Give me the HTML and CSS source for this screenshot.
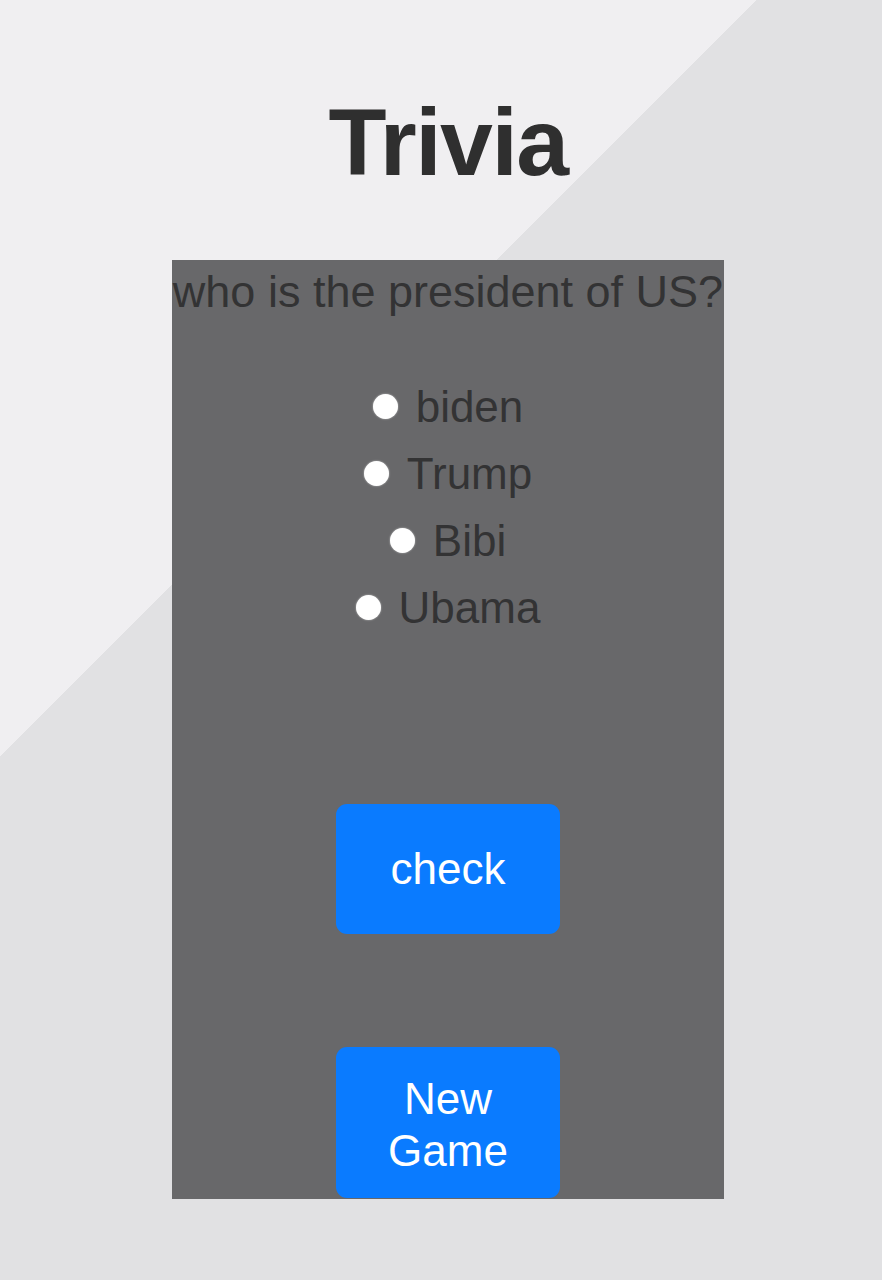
FILE: index.html
```html
<!DOCTYPE html>
<html lang="en">
<head>
<meta charset="utf-8">
<title>Trivia</title>
<link rel="stylesheet" href="styles.css">
</head>
<body>
<main class="page">
  <h1 class="title">Trivia</h1>
  <section class="card">
    <p class="question">who is the president of US?</p>
    <form class="options">
      <label class="option"><input type="radio" name="answer" class="radio"><span>biden</span></label>
      <label class="option"><input type="radio" name="answer" class="radio"><span>Trump</span></label>
      <label class="option"><input type="radio" name="answer" class="radio"><span>Bibi</span></label>
      <label class="option"><input type="radio" name="answer" class="radio"><span>Ubama</span></label>
    </form>
    <button class="btn btn-check" type="button">check</button>
    <button class="btn btn-new" type="button">New Game</button>
  </section>
</main>
</body>
</html>
```

FILE: styles.css
```css
html, body {
  margin: 0;
  padding: 0;
}

body {
  min-height: 1280px;
  background: linear-gradient(135deg, #f0eff1 535px, #e1e1e3 535px);
  font-family: "Liberation Sans", Arial, sans-serif;
  color: #333334;
}

.page {
  display: flex;
  flex-direction: column;
  align-items: center;
  padding: 95px 0 0 14px;
}

.title {
  margin: 0;
  font-size: 95px;
  line-height: 95px;
  font-weight: 700;
  letter-spacing: -1.5px;
  color: #2f2f2f;
}

.card {
  margin-top: 70px;
  width: 552px;
  height: 939px;
  background: #68686a;
  display: flex;
  flex-direction: column;
  align-items: center;
}

.question {
  margin: 0;
  padding-top: 6px;
  font-size: 45px;
  line-height: 52px;
  white-space: nowrap;
  color: #333334;
}

.options {
  margin-top: 55px;
  display: flex;
  flex-direction: column;
  align-items: center;
}

.option {
  display: flex;
  align-items: center;
  gap: 18px;
  height: 67px;
  font-size: 44px;
  line-height: 67px;
  color: #333334;
}

.radio {
  appearance: none;
  -webkit-appearance: none;
  margin: 0;
  width: 25px;
  height: 25px;
  border-radius: 50%;
  background: #ffffff;
  border: none;
  box-shadow: 0 0 2px rgba(255, 255, 255, 0.6);
}

.btn {
  width: 224px;
  border: none;
  border-radius: 11px;
  background: #0a7bff;
  color: #ffffff;
  font-family: "Liberation Sans", Arial, sans-serif;
  font-size: 44px;
  padding: 0 16px;
}

.btn-check {
  margin-top: 163px;
  height: 130px;
  line-height: 50px;
}

.btn-new {
  margin-top: 113px;
  height: 151px;
  line-height: 52px;
  display: flex;
  align-items: flex-start;
  justify-content: center;
  padding-top: 26px;
  text-align: center;
}
```
